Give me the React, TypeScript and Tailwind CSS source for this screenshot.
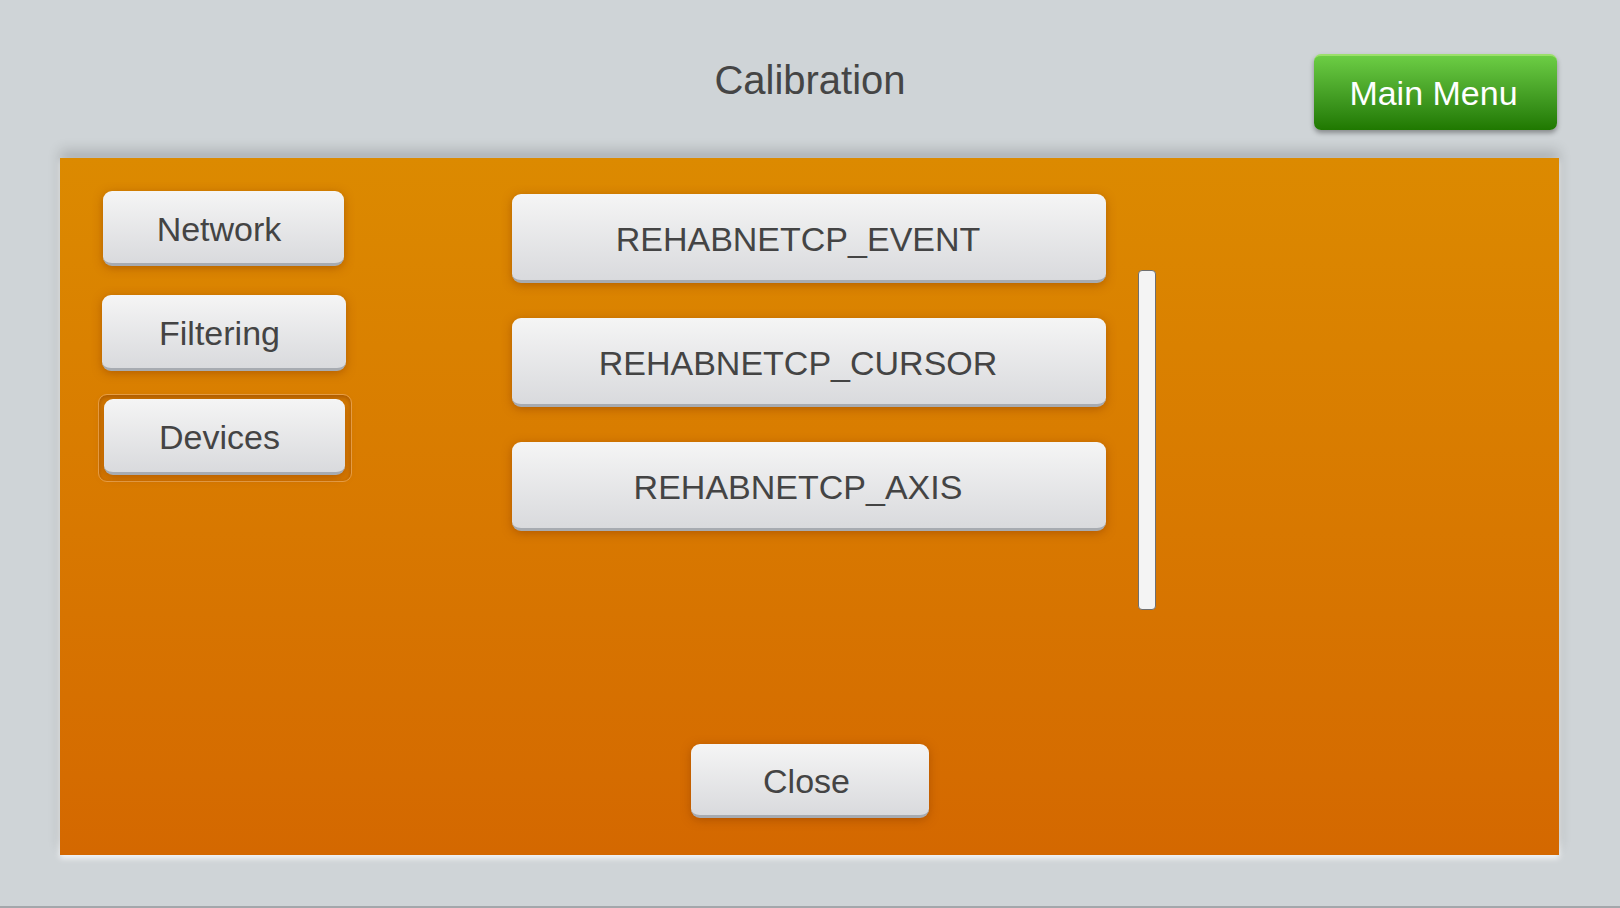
import React from "react";

const font = { fontFamily: '"Liberation Sans", Arial, sans-serif' };

const GreyButton = ({
  label,
  className,
  textClass = "",
}: {
  label: string;
  className: string;
  textClass?: string;
}) => (
  <button
    className={`flex items-center justify-center rounded-[9px] border-b-[3px] border-[#a7abb1] bg-gradient-to-b from-[#f5f5f5] to-[#d9dadd] pt-[4px] text-[34px] text-[#444] shadow-[0_2px_10px_rgba(140,60,0,0.5)] ${className}`}
    style={font}
  >
    <span className={textClass}>{label}</span>
  </button>
);

const devices = ["REHABNETCP_EVENT", "REHABNETCP_CURSOR", "REHABNETCP_AXIS"];

const App = () => {
  return (
    <div
      className="flex h-[908px] w-[1620px] flex-col overflow-hidden border-b-2 border-[#a3a7ab] bg-[#cfd4d7]"
      style={font}
    >
      {/* header */}
      <div className="grid h-[158px] grid-cols-[1fr_auto_1fr] px-[60px]">
        <div />
        <h1 className="mt-[56px] text-[40px] leading-[48px] text-[#454545]">
          Calibration
        </h1>
        <div className="flex justify-end pt-[54px] pr-[3px]">
          <button className="flex h-[76px] w-[243px] items-center justify-center rounded-[7px] border-t-2 border-[#9be06a] bg-gradient-to-b from-[#6ccd44] to-[#1f7800] pr-[4px] text-[34px] text-white shadow-[0_3px_5px_rgba(0,0,0,0.35)]">
            Main Menu
          </button>
        </div>
      </div>

      {/* orange panel */}
      <div className="mx-[60px] flex h-[697px] w-[1499px] flex-col bg-gradient-to-b from-[#dc8a00] to-[#d46800] pt-[33px] pb-[37px] shadow-[0_-8px_12px_rgba(0,0,0,0.16),0_3px_6px_rgba(255,255,255,0.9)]">
        <div className="flex items-start">
          {/* side menu */}
          <div className="ml-[38px] flex w-[254px] flex-col">
            <GreyButton
              label="Network"
              className="ml-[5px] h-[75px] w-[241px]"
              textClass="mr-[9px]"
            />
            <GreyButton
              label="Filtering"
              className="mt-[29px] ml-[4px] h-[76px] w-[244px]"
              textClass="mr-[9px]"
            />
            <div className="mt-[23px] rounded-[9px] border border-[#e8a048] pt-[4px] pr-[6px] pb-[6px] pl-[5px] shadow-[inset_0_2px_5px_rgba(120,50,0,0.5)]">
              <GreyButton
                label="Devices"
                className="h-[76px] w-[241px]"
                textClass="mr-[10px]"
              />
            </div>
          </div>

          {/* device list */}
          <div className="mt-[3px] ml-[160px] flex flex-col gap-[35px]">
            {devices.map((d) => (
              <GreyButton
                key={d}
                label={d}
                className="h-[89px] w-[594px]"
                textClass="mr-[22px]"
              />
            ))}
          </div>

          {/* scrollbar */}
          <div className="mt-[79px] ml-[32px] h-[340px] w-[18px] rounded-[4px] border border-[#6f6f6f] bg-[#f4f4f4]" />
        </div>

        <GreyButton
          label="Close"
          className="mt-auto h-[74px] w-[238px] self-center"
          textClass="mr-[6px]"
        />
      </div>
    </div>
  );
};

export default App;
